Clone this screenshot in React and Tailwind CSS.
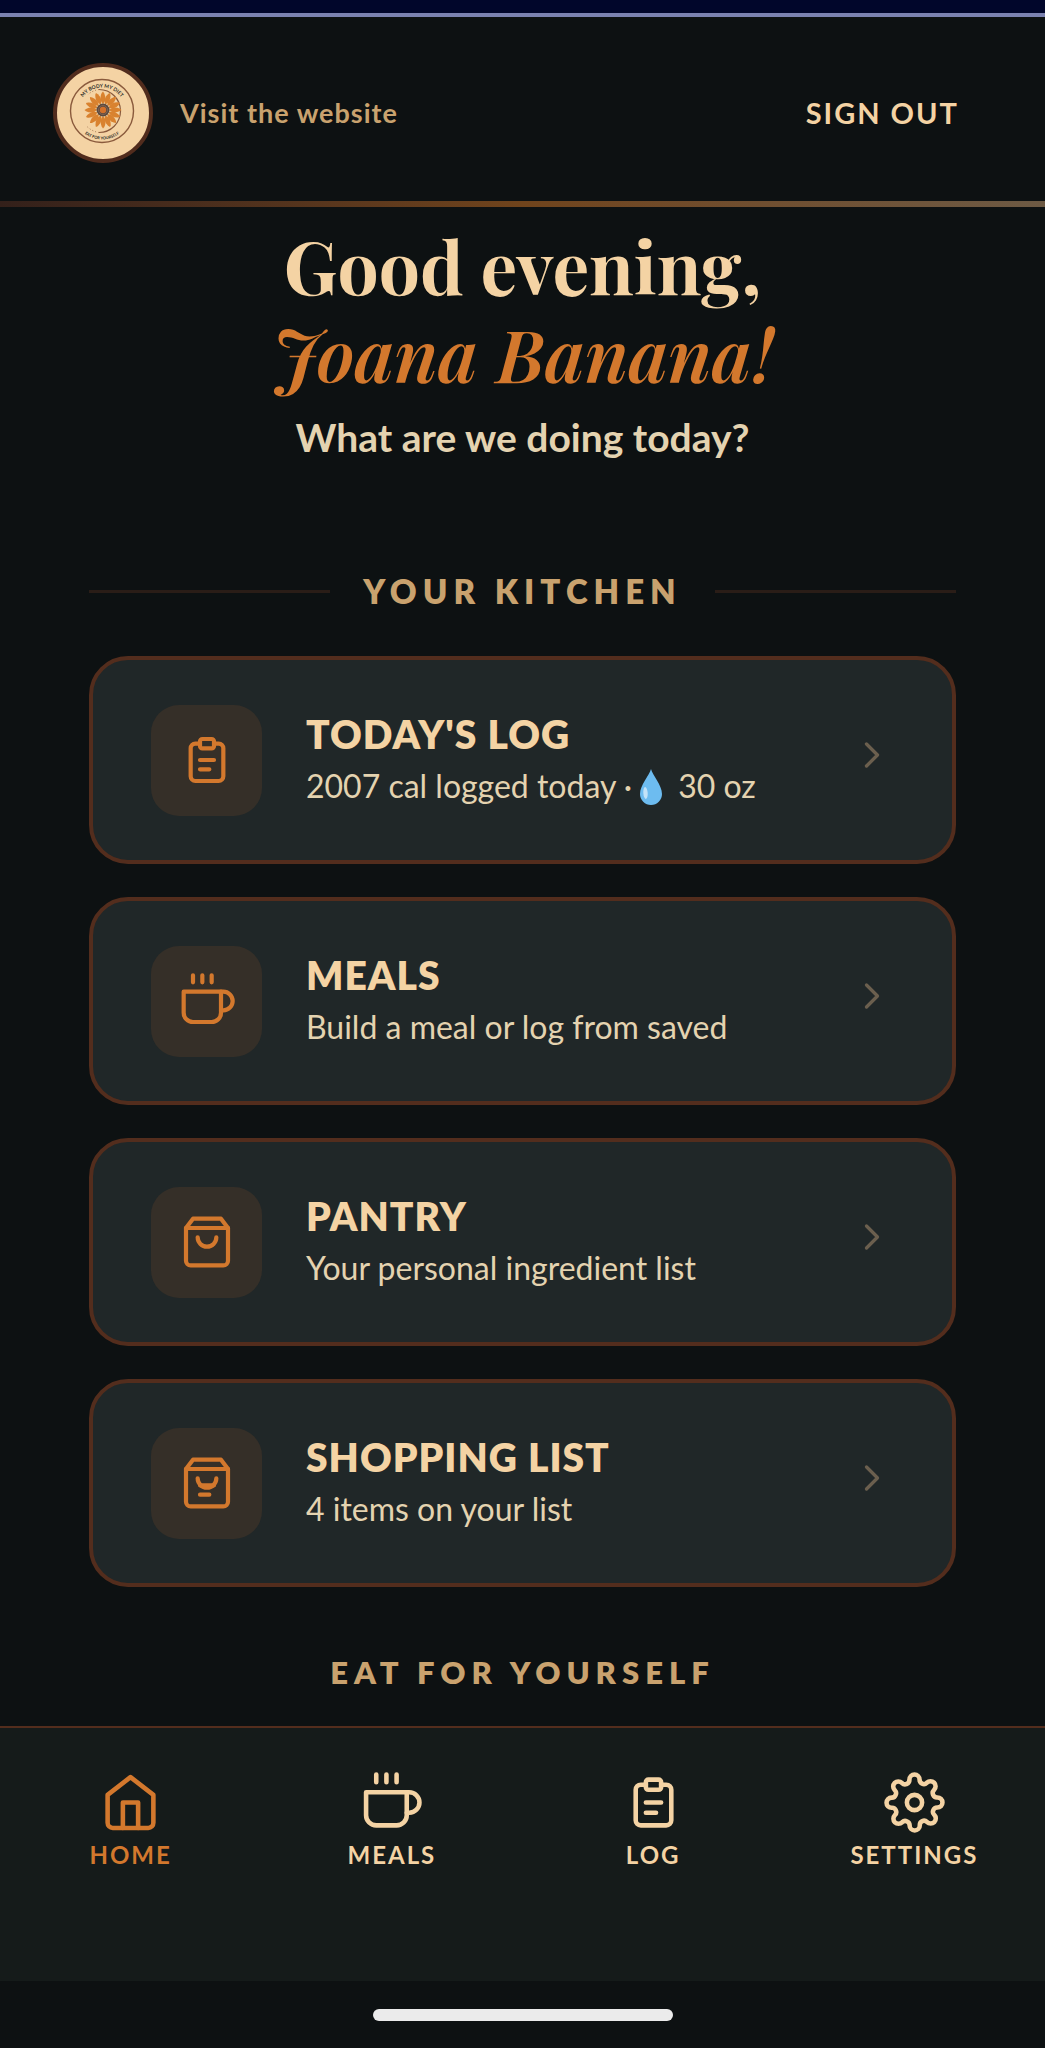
const PETALS = Array.from({ length: 16 }, (_, i) => i * 22.5);

function Icon({ children, className }) {
  return (
    <svg
      viewBox="0 0 24 24"
      fill="none"
      stroke="currentColor"
      strokeWidth="1.8"
      strokeLinecap="round"
      strokeLinejoin="round"
      className={className}
      aria-hidden="true"
    >
      {children}
    </svg>
  );
}

const clipboard = (
  <>
    <path d="M9 5H7a2 2 0 0 0-2 2v12a2 2 0 0 0 2 2h10a2 2 0 0 0 2-2V7a2 2 0 0 0-2-2h-2" />
    <rect x="9" y="3" width="6" height="4" rx="1" />
    <path d="M9 12h6M9 16h4" />
  </>
);

const cup = (
  <>
    <path d="M18 8h1a4 4 0 0 1 0 8h-1" />
    <path d="M2 8h16v9a4 4 0 0 1-4 4H6a4 4 0 0 1-4-4V8z" />
    <path d="M6 1v3M10 1v3M14 1v3" />
  </>
);

const bag = (
  <>
    <path d="M6 2L3 6v14a2 2 0 0 0 2 2h14a2 2 0 0 0 2-2V6l-3-4z" />
    <path d="M3 6h18" />
    <path d="M16 10a4 4 0 0 1-8 0" />
  </>
);

const bagList = (
  <>
    {bag}
    <path d="M9 13h6M9 17h4" />
  </>
);

const house = (
  <>
    <path d="M3 9l9-7 9 7v11a2 2 0 0 1-2 2H5a2 2 0 0 1-2-2z" />
    <path d="M9 22V12h6v10" />
  </>
);

const gear = (
  <>
    <circle cx="12" cy="12" r="3" />
    <path d="M19.4 15a1.65 1.65 0 0 0 .33 1.82l.06.06a2 2 0 0 1 0 2.83 2 2 0 0 1-2.83 0l-.06-.06a1.65 1.65 0 0 0-1.82-.33 1.65 1.65 0 0 0-1 1.51V21a2 2 0 0 1-2 2 2 2 0 0 1-2-2v-.09A1.65 1.65 0 0 0 9 19.4a1.65 1.65 0 0 0-1.82.33l-.06.06a2 2 0 0 1-2.83 0 2 2 0 0 1 0-2.83l.06-.06a1.65 1.65 0 0 0 .33-1.82 1.65 1.65 0 0 0-1.51-1H3a2 2 0 0 1-2-2 2 2 0 0 1 2-2h.09A1.65 1.65 0 0 0 4.6 9a1.65 1.65 0 0 0-.33-1.82l-.06-.06a2 2 0 0 1 0-2.83 2 2 0 0 1 2.83 0l.06.06a1.65 1.65 0 0 0 1.82.33H9a1.65 1.65 0 0 0 1-1.51V3a2 2 0 0 1 2-2 2 2 0 0 1 2 2v.09a1.65 1.65 0 0 0 1 1.51 1.65 1.65 0 0 0 1.82-.33l.06-.06a2 2 0 0 1 2.83 0 2 2 0 0 1 0 2.83l-.06.06a1.65 1.65 0 0 0-.33 1.82V9a1.65 1.65 0 0 0 1.51 1H21a2 2 0 0 1 2 2 2 2 0 0 1-2 2h-.09a1.65 1.65 0 0 0-1.51 1z" />
  </>
);

function Droplet() {
  return (
    <svg viewBox="0 0 22 36" className="inline-block w-[22px] h-9 ml-2 mr-4 align-[-7px]" aria-hidden="true">
      <path d="M11 0C12.5 6 22 16 22 25a11 11 0 0 1-22 0C0 16 9.500 6 11 0z" fill="#6dbcf0" />
      <ellipse cx="5.500" cy="24" rx="2.200" ry="6" fill="#c3e3f9" transform="rotate(-4 5.500 24)" />
    </svg>
  );
}

function Logo() {
  return (
    <svg viewBox="0 0 100 100" className="size-[100px]" role="img" aria-label="Logo">
      <circle cx="50" cy="50" r="48" fill="#f4d3a4" stroke="#512c1d" strokeWidth="4" />
      <circle cx="49" cy="48" r="31.500" fill="none" stroke="#8a5a3c" strokeWidth="1.400" />
      <path d="M46 26.500a21.500 21.500 0 1 1 0 43" fill="none" stroke="#8a5a3c" strokeWidth="1.200" />
      <path d="M46 26.500a21.500 21.500 0 0 0-11 5M46 69.500a21.500 21.500 0 0 1-12-6" fill="none" stroke="#8a5a3c" strokeWidth="0.800" strokeDasharray="1 2" />
      {PETALS.map((angle) => (
        <path
          key={angle}
          d="M50 41c-3-3-3.200-7-1.300-11l1.300-1.500 1.300 2c1.800 4 1.500 7.500-1.300 10.500z"
          fill="#d9822f"
          transform={`rotate(${angle} 50 47)`}
        />
      ))}
      <circle cx="50" cy="47" r="6.500" fill="#5b4a40" />
      <circle cx="50" cy="47" r="4.500" fill="none" stroke="#8a6a55" strokeWidth="0.800" />
      <circle cx="50" cy="47" r="3.200" fill="#d3702a" />
      <path id="logo-top" d="M25.500 48a23.500 23.500 0 0 1 47 0" fill="none" />
      <path id="logo-bottom" d="M20.500 48a28.500 28.500 0 0 0 57 0" fill="none" />
      <g fill="#2a2a26" textAnchor="middle" className="font-[Lato,sans-serif] font-bold">
        <text fontSize="5">
          <textPath href="#logo-top" startOffset="50%">MY BODY MY DIET</textPath>
        </text>
        <text fontSize="4">
          <textPath href="#logo-bottom" startOffset="50%">EAT FOR YOURSELF</textPath>
        </text>
      </g>
    </svg>
  );
}

const cards = [
  {
    title: "TODAY'S LOG",
    text: (
      <>
        2007 cal logged today ·<Droplet />30 oz
      </>
    ),
    icon: clipboard,
  },
  { title: "MEALS", text: "Build a meal or log from saved", icon: cup },
  { title: "PANTRY", text: "Your personal ingredient list", icon: bag },
  { title: "SHOPPING LIST", text: "4 items on your list", icon: bagList },
];

const tabs = [
  { label: "HOME", icon: house, active: true },
  { label: "MEALS", icon: cup },
  { label: "LOG", icon: clipboard },
  { label: "SETTINGS", icon: gear },
];

export default function App() {
  return (
    <div className="min-h-screen flex flex-col bg-[#0d1112] text-[#f4d3a4] font-[Lato,sans-serif]">
      <div className="h-[17px] bg-[#01062b] border-b-4 border-[#7b82b0]" />

      <header className="flex items-center justify-between pl-[53px] pr-[86px] pt-[46px] pb-[38px]">
        <a href="#" className="flex items-center gap-[27px]">
          <Logo />
          <span className="text-[27px] leading-9 font-bold tracking-[1px] text-[#c9a26e]">Visit the website</span>
        </a>
        <button className="text-[29px] leading-9 font-bold tracking-[2px]">SIGN OUT</button>
      </header>
      <div className="h-1.5 bg-linear-to-r from-[#33201a] via-[#70441c] to-[#6d5a44]" />

      <main className="flex-1 px-[89px] pt-3.5 pb-[34px]">
        <h1 className="text-center text-[73px] leading-[88px] font-bold font-['Playfair_Display','Liberation_Serif',serif]">
          Good evening,
          <br />
          <em className="font-semibold text-[#d3782d]">Joana Banana!</em>
        </h1>
        <p className="mt-4 text-center text-[39px] leading-[48px] font-bold text-[#e4d3b0]">What are we doing today?</p>

        <div className="mt-[110px] flex items-center gap-[33px]">
          <div className="flex-1 h-[3px] bg-[#2a1d17]" />
          <h2 className="text-[33px] leading-10 font-extrabold tracking-[6px] text-[#c9a26e]">YOUR KITCHEN</h2>
          <div className="flex-1 h-[3px] bg-[#2a1d17]" />
        </div>

        <div className="mt-[45px] flex flex-col gap-[33px]">
          {cards.map((c) => (
            <a
              key={c.title}
              href="#"
              className="flex items-center gap-11 h-52 px-[58px] bg-[#202728] border-4 border-[#532d1d] rounded-[39px]"
            >
              <div className="size-[111px] shrink-0 rounded-[28px] bg-[#352f28] text-[#d3782d] flex items-center justify-center">
                <Icon className="size-14">{c.icon}</Icon>
              </div>
              <div className="flex-1">
                <h3 className="text-[39px] leading-[48px] font-extrabold tracking-[1px]">{c.title}</h3>
                <p className="mt-1 text-[32px] leading-[48px] text-[#e4d3b0]">{c.text}</p>
              </div>
              <div className="pb-2.5 text-[#6b5f4e]">
                <Icon className="size-11">
                  <path d="M9 18l6-6-6-6" />
                </Icon>
              </div>
            </a>
          ))}
        </div>

        <p className="mt-[65px] text-center text-[31px] leading-10 font-extrabold tracking-[6px] text-[#c9a26e]">EAT FOR YOURSELF</p>
      </main>

      <nav className="grid grid-cols-4 border-t-2 border-[#532d1d] bg-[#151b1a] pt-11 pb-[110px]">
        {tabs.map((t) => (
          <a key={t.label} href="#" className={`flex flex-col items-center gap-1.5 ${t.active ? "text-[#d3782d]" : ""}`}>
            <Icon className="size-[61px]">{t.icon}</Icon>
            <span className="text-[24px] leading-8 font-bold tracking-[2px]">{t.label}</span>
          </a>
        ))}
      </nav>

      <div className="h-[67px] pt-7">
        <div className="mx-auto w-[300px] h-3 rounded-full bg-[#ebebeb]" />
      </div>
    </div>
  );
}
